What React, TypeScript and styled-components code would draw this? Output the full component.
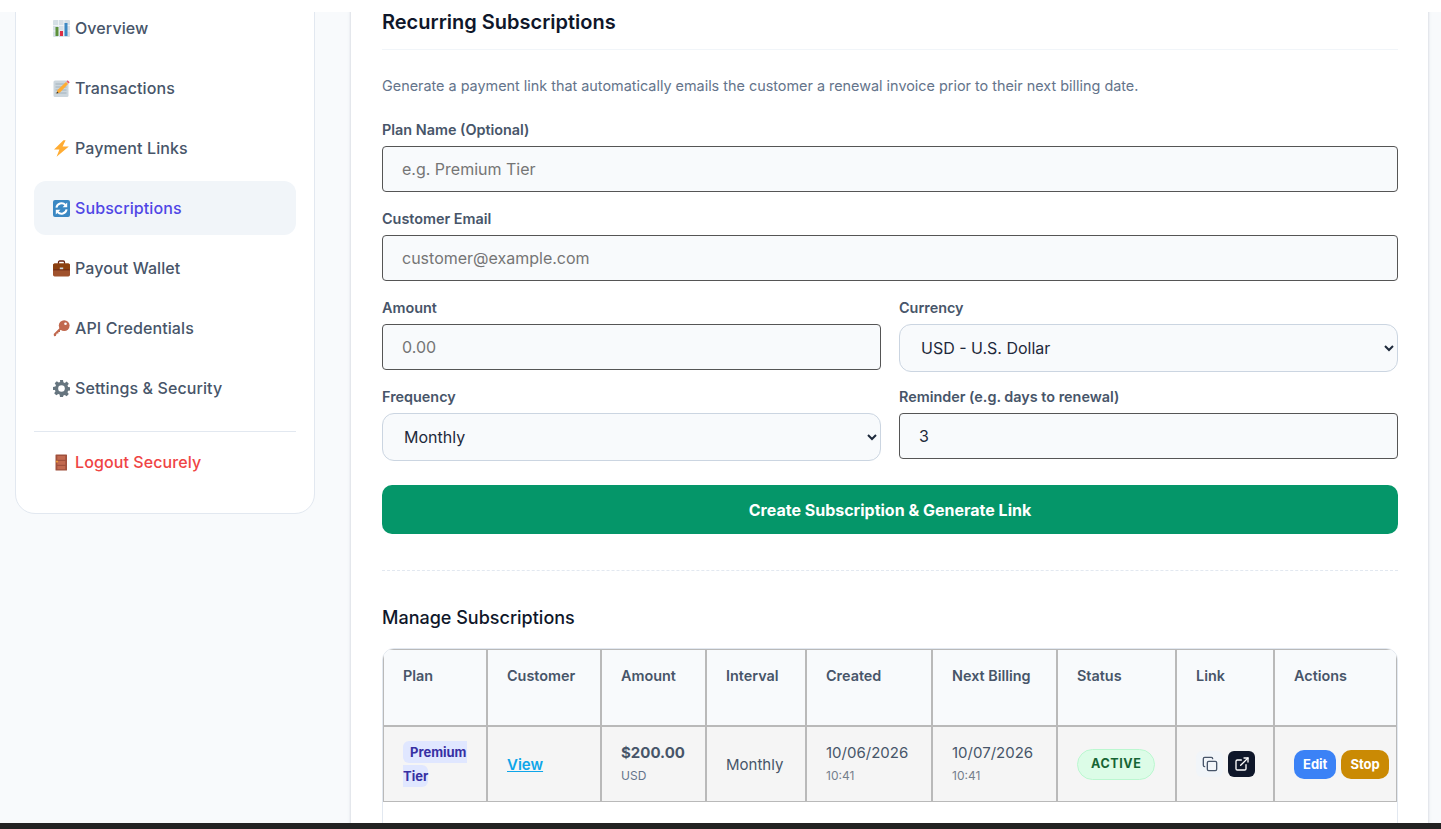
import { Copy, ExternalLink } from 'lucide-react'
import type { ReactNode } from 'react'
import styled, { createGlobalStyle } from 'styled-components'

const GlobalStyle = createGlobalStyle`
  html, body {
    margin: 0;
    height: 100%;
    overflow: hidden;
    background: #f8fafc;
    font-family: Inter, "Noto Sans", sans-serif;
  }
  * { box-sizing: border-box; }
`

const Viewport = styled.div`
  position: relative;
  height: 100vh;
  overflow: hidden;
  background: #f8fafc;
`

const TopStrip = styled.div`
  position: absolute;
  top: 0;
  left: 0;
  right: 0;
  height: 12px;
  background: #fff;
  z-index: 2;
`

const BottomBar = styled.div`
  position: absolute;
  left: 0;
  right: 0;
  bottom: 0;
  height: 6px;
  background: #222;
  z-index: 2;
`

const Layout = styled.div`
  display: flex;
  align-items: flex-start;
  margin-top: -40px;
  padding-left: 15px;
`

const Sidebar = styled.aside`
  flex: 0 0 300px;
  margin-top: 22px;
  padding: 18px 18px 24px;
  background: #fff;
  border: 1px solid #e2e8f0;
  border-radius: 20px;
`

const NavList = styled.nav`
  display: flex;
  flex-direction: column;
  gap: 6px;
`

const NavItem = styled.a<{ $active?: boolean; $danger?: boolean }>`
  display: flex;
  align-items: center;
  gap: 5px;
  height: 54px;
  padding: 0 19px;
  border-radius: 12px;
  font-size: 16px;
  font-weight: 500;
  letter-spacing: 0.1px;
  color: ${({ $active, $danger }) =>
    $danger ? '#ef4444' : $active ? '#4f46e5' : '#475569'};
  background: ${({ $active }) => ($active ? '#f1f5f9' : 'transparent')};
`

const NavDivider = styled.hr`
  border: 0;
  border-top: 1px solid #e2e8f0;
  margin: 16px 0 0;
`

const LogoutWrap = styled.div`
  margin-top: 3px;
`

const EmojiIcon = styled.svg`
  flex: 0 0 17px;
  width: 17px;
  height: 17px;
`

const MainPanel = styled.main`
  flex: 0 0 1077px;
  margin-left: 36px;
  height: 900px;
  padding: 49px 30px 0 31px;
  background: #fff;
  box-shadow: 0 0 3px rgba(100, 116, 139, 0.35);
`

const PanelTitle = styled.h2`
  margin: 0;
  padding-bottom: 14px;
  border-bottom: 1px solid #f1f5f9;
  font-size: 20px;
  line-height: 26px;
  font-weight: 600;
  color: #0f172a;
`

const Intro = styled.p`
  margin: 26px 0 0;
  font-size: 14.4px;
  line-height: 20px;
  color: #64748b;
`

const Form = styled.form`
  display: flex;
  flex-direction: column;
  margin-top: 24px;
`

const FieldRow = styled.div`
  display: grid;
  grid-template-columns: 1fr 1fr;
  column-gap: 18px;
`

const Field = styled.label`
  display: block;
  margin-bottom: 17px;
`

const LabelText = styled.span`
  display: block;
  margin-bottom: 6px;
  font-size: 14.4px;
  line-height: 20px;
  font-weight: 600;
  color: #475569;
`

const TextInput = styled.input`
  display: block;
  width: 100%;
  height: 46px;
  padding: 0 19px;
  border: 1px solid #555;
  border-radius: 4px;
  background: #f8fafc;
  font-family: inherit;
  font-size: 16px;
  color: #1e293b;

  &::placeholder {
    color: #757575;
  }
`

const SelectInput = styled.select`
  display: block;
  width: 100%;
  height: 48px;
  margin-bottom: -2px;
  padding: 0 17px;
  border: 1px solid #cbd5e1;
  border-radius: 12px;
  background: #f8fafc;
  font-family: inherit;
  font-size: 16px;
  color: #1e293b;
`

const SubmitButton = styled.button`
  height: 49px;
  margin-top: 9px;
  border: 0;
  border-radius: 10px;
  background: #059669;
  color: #fff;
  font-family: inherit;
  font-size: 16px;
  font-weight: 700;
`

const DashedRule = styled.div`
  margin-top: 36px;
  border-top: 1px dashed #e2e8f0;
`

const SectionTitle = styled.h3`
  margin: 35px 0 18px;
  font-size: 18px;
  line-height: 24px;
  font-weight: 500;
  color: #0f172a;
`

const TableWrap = styled.div`
  height: 300px;
  border: 1px solid #e2e8f0;
  border-radius: 12px;
  overflow: hidden;
`

const Table = styled.table`
  width: 1014px;
  table-layout: fixed;
  border-spacing: 0;
  border-collapse: separate;
`

const HeadCell = styled.th<{ $width: number }>`
  width: ${({ $width }) => $width}px;
  height: 77px;
  padding: 13px 19px;
  border: 1px solid #b9b9b9;
  background: #f8fafc;
  vertical-align: top;
  text-align: left;
  font-size: 14.4px;
  line-height: 25px;
  font-weight: 600;
  color: #475569;
`

const BodyCell = styled.td`
  height: 76px;
  padding: 0 0 0 19px;
  border: 1px solid #b9b9b9;
  background: #f5f5f5;
  vertical-align: middle;
  font-size: 15px;
  color: #475569;
`

const PlanCell = styled(BodyCell)`
  padding-right: 19px;
  line-height: 23px;
`

const PlanBadge = styled.span`
  padding: 3px 0 3px 7px;
  border-radius: 6px;
  background: #e0e7ff;
  color: #3730a3;
  font-size: 13px;
  font-weight: 700;
`

const ViewLink = styled.a`
  color: #0ea5e9;
  font-size: 15px;
  font-weight: 600;
  text-decoration: underline;
`

const PrimaryLine = styled.div<{ $bold?: boolean }>`
  font-size: 15px;
  line-height: 24px;
  font-weight: ${({ $bold }) => ($bold ? 700 : 400)};
  color: #475569;
`

const SubLine = styled.div<{ $muted?: boolean }>`
  font-size: 12px;
  line-height: 22px;
  color: ${({ $muted }) => ($muted ? '#757f8c' : '#64748b')};
`

const StatusBadge = styled.span`
  display: inline-block;
  padding: 0 13px;
  height: 31px;
  line-height: 28px;
  border: 1px solid #bbf7d0;
  border-radius: 999px;
  background: #dcfce7;
  color: #166534;
  font-size: 12.5px;
  font-weight: 700;
  letter-spacing: 0.6px;
`

const ButtonGroup = styled.div`
  display: flex;
  align-items: center;
  gap: 5px;
`

const IconButton = styled.button<{ $dark?: boolean }>`
  display: flex;
  align-items: center;
  justify-content: center;
  width: 27px;
  height: 26px;
  padding: 0;
  border: 0;
  border-radius: 6px;
  background: ${({ $dark }) => ($dark ? '#0f172a' : '#f1f5f9')};
  color: ${({ $dark }) => ($dark ? '#fff' : '#475569')};
`

const ActionButton = styled.button<{ $color: string }>`
  height: 29px;
  padding: 0 9px;
  border: 0;
  border-radius: 10px;
  background: ${({ $color }) => $color};
  color: #fff;
  font-family: inherit;
  font-size: 13px;
  font-weight: 700;
`

const BarIcon = () => (
  <EmojiIcon viewBox="0 0 17 17">
    <rect width="17" height="17" rx="1" fill="#d5dfe6" />
    <path d="M0 5.5h17M0 11h17M5.5 0v17M11 0v17" stroke="#eef3f6" />
    <rect x="2.5" y="7" width="3" height="9" fill="#5c913b" />
    <rect x="7" y="11" width="3" height="5" fill="#dd2e44" />
    <rect x="11.5" y="3" width="3" height="13" fill="#3b88c3" />
  </EmojiIcon>
)

const MemoIcon = () => (
  <EmojiIcon viewBox="0 0 17 17">
    <rect x="0.5" y="0.5" width="15" height="16.5" rx="1.5" fill="#ccd6dd" />
    <path d="M2.5 4h11M2.5 7h11M2.5 10h11M2.5 13h11" stroke="#99aab5" strokeWidth="0.8" />
    <path d="M3.5 13.5l1-3.5L13 2l2 2-8 8.5z" fill="#ffac33" />
    <path d="M13.5 1.5l1.2-1.2 2 2-1.2 1.2z" fill="#ea596e" />
    <path d="M3.5 13.5l.6-2 1.4 1.4z" fill="#292f33" />
  </EmojiIcon>
)

const BoltIcon = () => (
  <EmojiIcon viewBox="0 0 17 17">
    <path d="M10.5 0.3L1 9.6h5.4L3.6 16.7 15.8 6.6h-6.2l3-6.3z" fill="#ffac33" />
  </EmojiIcon>
)

const SyncIcon = () => (
  <EmojiIcon viewBox="0 0 17 17">
    <rect width="17" height="17" rx="2" fill="#3b88c3" />
    <path d="M3.4 7.6A5.2 5.2 0 0 1 12.4 5" fill="none" stroke="#fff" strokeWidth="2" />
    <path d="M13.6 9.4A5.2 5.2 0 0 1 4.6 12" fill="none" stroke="#fff" strokeWidth="2" />
    <path d="M14.2 2.6v4.6H9.6zM2.8 14.4V9.8h4.6z" fill="#fff" />
  </EmojiIcon>
)

const BriefcaseIcon = () => (
  <EmojiIcon viewBox="0 0 17 17">
    <path d="M5.5 4V2.2C5.5 1.5 6 1 6.7 1h3.6c.7 0 1.2.5 1.2 1.2V4" fill="none" stroke="#662113" strokeWidth="1.3" />
    <rect y="3.5" width="17" height="13" rx="1.7" fill="#a0522d" />
    <rect y="3.5" width="17" height="6.5" rx="1.7" fill="#8b4010" />
    <rect y="9.5" width="17" height="0.8" fill="#662113" />
    <rect x="6.8" y="7.5" width="3.4" height="1.7" fill="#ccd6dd" />
  </EmojiIcon>
)

const KeyIcon = () => (
  <EmojiIcon viewBox="0 0 17 17">
    <path d="M1 16.2L0.7 14l7-7 2.3 2.3-3 1v1.6H5.4v1.6H3.7L2.8 16z" fill="#c1694f" />
    <circle cx="11.2" cy="5.6" r="5.4" fill="#c1694f" />
    <circle cx="12.5" cy="3.8" r="1.3" fill="#fff" />
  </EmojiIcon>
)

const GearIcon = () => (
  <EmojiIcon viewBox="0 0 17 17">
    <path
      d="M7 0h3l.4 2.3 1.4.6 1.9-1.3 2.1 2.1-1.3 1.9.6 1.4 2.4.4v3l-2.4.4-.6 1.4 1.3 1.9-2.1 2.1-1.9-1.3-1.4.6L10 17H7l-.4-2.4-1.4-.6-1.9 1.3-2.1-2.1 1.3-1.9-.6-1.4L0 10V7l2.4-.4.6-1.4-1.3-1.9 2.1-2.1 1.9 1.3 1.4-.6z"
      fill="#66757f"
    />
    <circle cx="8.5" cy="8.5" r="3.3" fill="#fff" />
  </EmojiIcon>
)

const DoorIcon = () => (
  <EmojiIcon viewBox="0 0 17 17">
    <rect x="2.5" y="0.5" width="11.5" height="16" rx="0.6" fill="#a0503c" />
    <rect x="4.3" y="2" width="8" height="3.8" fill="#c1694f" />
    <rect x="4.3" y="7" width="8" height="3.8" fill="#c1694f" />
    <rect x="4.3" y="12" width="8" height="3.2" fill="#c1694f" />
    <rect x="3.2" y="6.8" width="1.6" height="1.6" fill="#ffac33" />
  </EmojiIcon>
)

type NavEntry = { label: string; icon: ReactNode; active?: boolean }

const navEntries: NavEntry[] = [
  { label: 'Overview', icon: <BarIcon /> },
  { label: 'Transactions', icon: <MemoIcon /> },
  { label: 'Payment Links', icon: <BoltIcon /> },
  { label: 'Subscriptions', icon: <SyncIcon />, active: true },
  { label: 'Payout Wallet', icon: <BriefcaseIcon /> },
  { label: 'API Credentials', icon: <KeyIcon /> },
  { label: 'Settings & Security', icon: <GearIcon /> },
]

const columns = [
  { label: 'Plan', width: 104 },
  { label: 'Customer', width: 114 },
  { label: 'Amount', width: 105 },
  { label: 'Interval', width: 100 },
  { label: 'Created', width: 126 },
  { label: 'Next Billing', width: 125 },
  { label: 'Status', width: 119 },
  { label: 'Link', width: 98 },
  { label: 'Actions', width: 123 },
]

export default function App() {
  return (
    <Viewport>
      <GlobalStyle />
      <TopStrip />
      <Layout>
        <Sidebar>
          <NavList>
            {navEntries.map((entry) => (
              <NavItem key={entry.label} $active={entry.active}>
                {entry.icon}
                <span>{entry.label}</span>
              </NavItem>
            ))}
          </NavList>
          <NavDivider />
          <LogoutWrap>
            <NavItem $danger>
              <DoorIcon />
              <span>Logout Securely</span>
            </NavItem>
          </LogoutWrap>
        </Sidebar>

        <MainPanel>
          <PanelTitle>Recurring Subscriptions</PanelTitle>
          <Intro>
            Generate a payment link that automatically emails the customer a
            renewal invoice prior to their next billing date.
          </Intro>

          <Form>
            <Field>
              <LabelText>Plan Name (Optional)</LabelText>
              <TextInput type="text" placeholder="e.g. Premium Tier" />
            </Field>
            <Field>
              <LabelText>Customer Email</LabelText>
              <TextInput type="email" placeholder="customer@example.com" />
            </Field>
            <FieldRow>
              <Field>
                <LabelText>Amount</LabelText>
                <TextInput type="text" placeholder="0.00" />
              </Field>
              <Field>
                <LabelText>Currency</LabelText>
                <SelectInput defaultValue="USD">
                  <option value="USD">USD - U.S. Dollar</option>
                </SelectInput>
              </Field>
            </FieldRow>
            <FieldRow>
              <Field>
                <LabelText>Frequency</LabelText>
                <SelectInput defaultValue="monthly">
                  <option value="monthly">Monthly</option>
                </SelectInput>
              </Field>
              <Field>
                <LabelText>Reminder (e.g. days to renewal)</LabelText>
                <TextInput type="text" defaultValue="3" />
              </Field>
            </FieldRow>
            <SubmitButton type="button">
              Create Subscription &amp; Generate Link
            </SubmitButton>
          </Form>

          <DashedRule />
          <SectionTitle>Manage Subscriptions</SectionTitle>

          <TableWrap>
            <Table>
              <thead>
                <tr>
                  {columns.map((column) => (
                    <HeadCell key={column.label} $width={column.width}>
                      {column.label}
                    </HeadCell>
                  ))}
                </tr>
              </thead>
              <tbody>
                <tr>
                  <PlanCell>
                    <PlanBadge>Premium Tier</PlanBadge>
                  </PlanCell>
                  <BodyCell>
                    <ViewLink>View</ViewLink>
                  </BodyCell>
                  <BodyCell>
                    <PrimaryLine $bold>$200.00</PrimaryLine>
                    <SubLine>USD</SubLine>
                  </BodyCell>
                  <BodyCell>Monthly</BodyCell>
                  <BodyCell>
                    <PrimaryLine>10/06/2026</PrimaryLine>
                    <SubLine $muted>10:41</SubLine>
                  </BodyCell>
                  <BodyCell>
                    <PrimaryLine>10/07/2026</PrimaryLine>
                    <SubLine $muted>10:41</SubLine>
                  </BodyCell>
                  <BodyCell>
                    <StatusBadge>ACTIVE</StatusBadge>
                  </BodyCell>
                  <BodyCell>
                    <ButtonGroup>
                      <IconButton>
                        <Copy size={16} />
                      </IconButton>
                      <IconButton $dark>
                        <ExternalLink size={16} />
                      </IconButton>
                    </ButtonGroup>
                  </BodyCell>
                  <BodyCell>
                    <ButtonGroup>
                      <ActionButton $color="#3b82f6">Edit</ActionButton>
                      <ActionButton $color="#ca8a04">Stop</ActionButton>
                    </ButtonGroup>
                  </BodyCell>
                </tr>
              </tbody>
            </Table>
          </TableWrap>
        </MainPanel>
      </Layout>
      <BottomBar />
    </Viewport>
  )
}
